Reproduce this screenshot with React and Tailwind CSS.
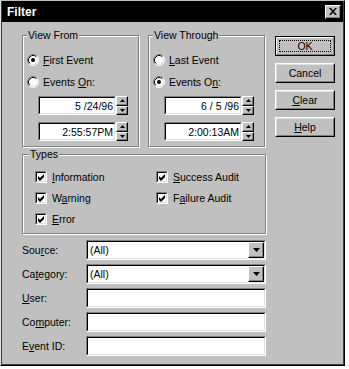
import React from "react";

function U({ children }) {
  return <span className="underline decoration-1 underline-offset-[1px]">{children}</span>;
}

function Radio({ checked }) {
  return (
    <svg width="12" height="12" viewBox="0 0 12 12" className="shrink-0">
      <circle cx="6" cy="6" r="5" fill="#fff" />
      <path d="M2.11 9.89A5.5 5.5 0 0 1 9.89 2.11" stroke="#808080" fill="none" />
      <path d="M9.89 2.11A5.5 5.5 0 0 1 2.11 9.89" stroke="#fff" fill="none" />
      <path d="M2.82 9.18A4.5 4.5 0 0 1 9.18 2.82" stroke="#000" fill="none" />
      <path d="M9.18 2.82A4.5 4.5 0 0 1 2.82 9.18" stroke="#dfdfdf" fill="none" />
      {checked && <circle cx="6" cy="6" r="2" fill="#000" />}
    </svg>
  );
}

function Check() {
  return (
    <div className="w-[12px] h-[12px] shrink-0 border border-t-[#808080] border-l-[#808080] border-r-white border-b-white">
      <div className="w-full h-full bg-white border border-t-black border-l-black border-r-[#dfdfdf] border-b-[#dfdfdf] flex items-center justify-center">
        <svg width="7" height="7" viewBox="0 0 7 7">
          <path d="M0 2L2 4L6 0V3L2 7L0 5Z" fill="#000" />
        </svg>
      </div>
    </div>
  );
}

function Sunken({ className, children }) {
  return (
    <div className={`border border-t-[#808080] border-l-[#808080] border-r-white border-b-white ${className}`}>
      <div className="h-full w-full bg-white border border-t-black border-l-black border-r-[#dfdfdf] border-b-[#dfdfdf] flex">
        {children}
      </div>
    </div>
  );
}

function SpinBtn({ up }) {
  return (
    <div className="flex-1 bg-[#c0c0c0] border border-t-white border-l-white border-r-black border-b-black shadow-[inset_-1px_-1px_0_#808080] flex items-center justify-center">
      <svg width="5" height="3" viewBox="0 0 5 3">
        <path d={up ? "M2.5 0L5 3H0Z" : "M0 0H5L2.5 3Z"} fill="#000" />
      </svg>
    </div>
  );
}

function SpinField({ value, className }) {
  return (
    <div className={`flex h-[19px] w-[90px] ${className}`}>
      <Sunken className="flex-1">
        <div className="flex-1 flex items-center justify-end pr-[1px]">{value}</div>
      </Sunken>
      <div className="w-[12px] flex flex-col">
        <SpinBtn up />
        <SpinBtn />
      </div>
    </div>
  );
}

function Group({ label, className, labelClass, children }) {
  return (
    <div className={`relative border border-[#808080] shadow-[inset_1px_1px_0_#fff,1px_1px_0_#fff] ${className}`}>
      <span className={`absolute -top-[7px] bg-[#c0c0c0] px-[1px] whitespace-nowrap ${labelClass}`}>{label}</span>
      {children}
    </div>
  );
}

function RadioRow({ checked, children, className }) {
  return (
    <div className={`flex items-center h-[16px] gap-[4px] ${className}`}>
      <Radio checked={checked} />
      <span className="whitespace-nowrap">{children}</span>
    </div>
  );
}

function CheckRow({ children }) {
  return (
    <div className="flex items-center h-[16px] gap-[5px]">
      <Check />
      <span className="whitespace-nowrap">{children}</span>
    </div>
  );
}

function Combo({ value }) {
  return (
    <Sunken className="w-[180px] h-full">
      <div className="flex-1 flex items-center pl-[2px]">{value}</div>
      <div className="w-[16px] h-full bg-[#c0c0c0] border border-t-white border-l-white border-r-black border-b-black shadow-[inset_-1px_-1px_0_#808080] flex items-center justify-center">
        <svg width="7" height="4" viewBox="0 0 7 4">
          <path d="M0 0H7L3.5 4Z" fill="#000" />
        </svg>
      </div>
    </Sunken>
  );
}

function FieldRow({ label, children }) {
  return (
    <div className="flex items-center h-[20px]">
      <div className="w-[64px] whitespace-nowrap">{label}</div>
      {children}
    </div>
  );
}

function Btn({ children, def }) {
  if (def) {
    return (
      <div className="w-[60px] h-[20px] border border-black">
        <div className="h-full w-full border border-t-white border-l-white border-r-[#808080] border-b-[#808080] p-[2px]">
          <div className="h-full w-full border border-dotted border-black flex items-center justify-center">
            {children}
          </div>
        </div>
      </div>
    );
  }
  return (
    <div className="w-[60px] h-[20px] border border-t-white border-l-white border-r-black border-b-black">
      <div className="h-full w-full border border-t-[#dfdfdf] border-l-[#dfdfdf] border-r-[#808080] border-b-[#808080] flex items-center justify-center">
        {children}
      </div>
    </div>
  );
}

export default function App() {
  return (
    <div className="w-[349px] h-[369px] bg-white font-['Liberation_Sans',Arial,sans-serif] text-[10.5px] leading-[12px] text-black">
      <div className="w-[345px] h-[366px] bg-[#c0c0c0] border border-t-[#c0c0c0] border-l-[#e0e0e0] border-r-black border-b-black">
        <div className="h-full flex flex-col border-l border-r border-b border-[#404040]">
          <div className="h-[21px] shrink-0 bg-black flex items-center justify-between pl-[5px] pr-[2px]">
            <span className="text-white font-bold text-[12px]">Filter</span>
            <div className="w-[16px] h-[14px] bg-[#c0c0c0] border border-t-white border-l-white border-r-black border-b-black shadow-[inset_-1px_-1px_0_#808080] flex items-center justify-center">
              <svg width="8" height="7" viewBox="0 0 8 7">
                <path d="M0 0h2l2 2.5L6 0h2L5 3.5L8 7H6L4 4.5L2 7H0l3-3.5Z" fill="#000" />
              </svg>
            </div>
          </div>

          <div className="flex pl-[20px]">
            <div className="w-[244px] flex flex-col">
              <div className="flex gap-[9px] mt-[13px]">
                <Group label="View From" className="w-[117px] h-[112px]" labelClass="left-[4px]">
                  <div className="flex flex-col pt-[16px] pl-[4px]">
                    <RadioRow checked><U>F</U>irst Event</RadioRow>
                    <RadioRow className="mt-[6px]">Events <U>O</U>n:</RadioRow>
                    <SpinField className="mt-[6px] ml-[11px]" value="5 /24/96" />
                    <SpinField className="mt-[7px] ml-[11px]" value="2:55:57PM" />
                  </div>
                </Group>
                <Group label="View Through" className="w-[117px] h-[112px]" labelClass="left-[4px]">
                  <div className="flex flex-col pt-[16px] pl-[4px]">
                    <RadioRow><U>L</U>ast Event</RadioRow>
                    <RadioRow checked className="mt-[6px]">Events O<U>n</U>:</RadioRow>
                    <SpinField className="mt-[6px] ml-[11px]" value="6 / 5 /96" />
                    <SpinField className="mt-[7px] ml-[11px]" value="2:00:13AM" />
                  </div>
                </Group>
              </div>

              <Group label="Types" className="mt-[7px] h-[80px]" labelClass="left-[6px]">
                <div className="grid grid-cols-[121px_1fr] gap-y-[5px] pt-[14px] pl-[12px]">
                  <CheckRow><U>I</U>nformation</CheckRow>
                  <CheckRow><U>S</U>uccess Audit</CheckRow>
                  <CheckRow>W<U>a</U>rning</CheckRow>
                  <CheckRow>F<U>a</U>ilure Audit</CheckRow>
                  <CheckRow><U>E</U>rror</CheckRow>
                </div>
              </Group>

              <div className="flex flex-col gap-[4px] mt-[6px]">
                <FieldRow label={<>Sou<U>r</U>ce:</>}>
                  <Combo value="(All)" />
                </FieldRow>
                <FieldRow label={<>Ca<U>t</U>egory:</>}>
                  <Combo value="(All)" />
                </FieldRow>
                <FieldRow label={<><U>U</U>ser:</>}>
                  <Sunken className="w-[180px] h-full" />
                </FieldRow>
                <FieldRow label={<>Co<U>m</U>puter:</>}>
                  <Sunken className="w-[180px] h-full" />
                </FieldRow>
                <FieldRow label={<>E<U>v</U>ent ID:</>}>
                  <Sunken className="w-[180px] h-full" />
                </FieldRow>
              </div>
            </div>

            <div className="ml-[9px] pt-[14px] flex flex-col gap-[7px]">
              <Btn def>OK</Btn>
              <Btn>Cancel</Btn>
              <Btn><U>C</U>lear</Btn>
              <Btn><U>H</U>elp</Btn>
            </div>
          </div>
        </div>
      </div>
    </div>
  );
}
